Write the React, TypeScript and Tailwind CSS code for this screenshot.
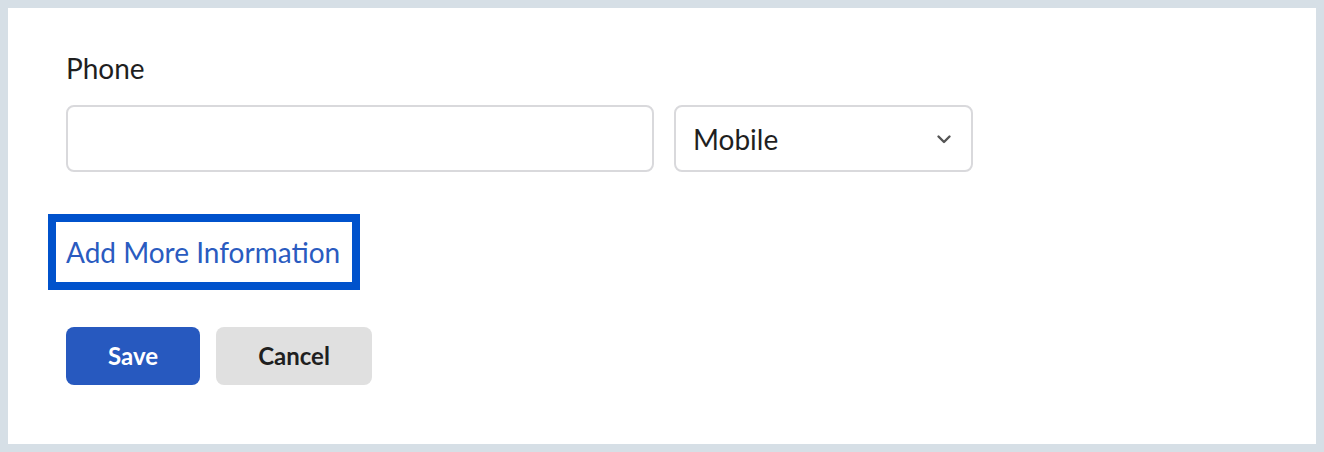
const FONT = "font-['Lato','Noto_Sans',sans-serif]";

export default function App() {
  return (
    <div className={`w-[1324px] h-[452px] bg-[#d6dfe6] p-2 ${FONT}`}>
      <div className="h-full bg-white pl-[58px] pt-[41px]">
        <label className="block text-[28px] leading-[38px] text-[#1f1f1f]">Phone</label>
        <div className="mt-[18px] flex gap-5">
          <input
            type="text"
            className="w-[588px] h-[67px] rounded-lg border-2 border-[#d9d9dc] bg-white px-4 text-[28px] outline-none"
          />
          <div className="w-[299px] h-[67px] rounded-lg border-2 border-[#d9d9dc] bg-white flex items-center pl-[17px] pr-[20px]">
            <span className="flex-1 text-[28px] text-[#1f1f1f]">Mobile</span>
            <svg width="14" height="8" viewBox="0 0 14 8" fill="none" className="overflow-visible" aria-hidden>
              <path
                d="M1.5 1.5l5.5 5.5 5.5-5.5"
                stroke="#555"
                strokeWidth="2.4"
                strokeLinecap="round"
                strokeLinejoin="round"
              />
            </svg>
          </div>
        </div>
        <div className="mt-[42px] -ml-[18px] w-[312px] h-[76px] border-[8px] border-[#0052cc] flex items-center pl-[10px]">
          <span className="text-[28px] text-[#2a5bc0]">Add More Information</span>
        </div>
        <div className="mt-[37px] flex gap-4">
          <button className="w-[134px] h-[58px] rounded-lg bg-[#2759bf] text-white text-[24px] font-bold">
            Save
          </button>
          <button className="w-[156px] h-[58px] rounded-lg bg-[#e0e0e0] text-[#1f1f1f] text-[24px] font-bold">
            Cancel
          </button>
        </div>
      </div>
    </div>
  );
}
